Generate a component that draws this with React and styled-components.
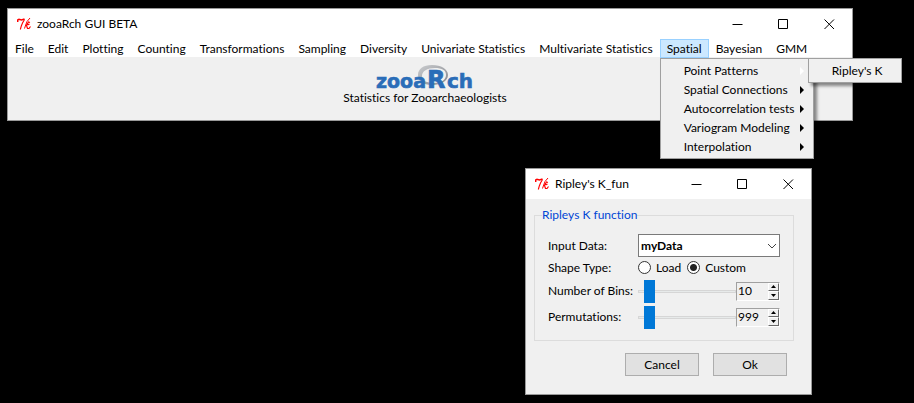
import React, { useState } from "react";
import styled, { createGlobalStyle, css } from "styled-components";

const GlobalStyle = createGlobalStyle`
  *, *::before, *::after { box-sizing: border-box; }
  body {
    margin: 0;
    background: #000;
    color: #000;
    font: 12px/16px Lato, "Open Sans", sans-serif;
    font-variant-ligatures: none;
  }
  button, input, select { font: inherit; color: inherit; margin: 0; }
`;

const Desktop = styled.main`
  position: relative;
  min-height: 100vh;
  padding: 8px 61px 8px 7px;
`;

const Window = styled.section`
  background: #f0f0f0;
  border: 1px solid #999;
`;

const Dialog = styled(Window)`
  position: absolute;
  left: 525px;
  top: 168px;
  width: 287px;
`;

const Bar = styled.header`
  display: flex;
  align-items: center;
  height: 30px;
  padding-left: 9px;
  background: #fff;
`;

const Title = styled.h1`
  flex: 1;
  margin: 0 0 0 6px;
  font-size: 12px;
  font-weight: 400;
  white-space: nowrap;
`;

const CaptionButton = styled.button`
  display: grid;
  place-items: center;
  width: 46px;
  height: 28px;
  padding: 0;
  border: 0;
  background: transparent;
`;

const MenuBar = styled.nav`
  display: flex;
  height: 18px;
  background: #fff;
`;

const MenuSlot = styled.div`
  position: relative;
`;

const MenuButton = styled.button`
  height: 19px;
  padding: 0 6px;
  border: 1px solid ${(p) => (p.$open ? "#99d1ff" : "transparent")};
  background: ${(p) => (p.$open ? "#cce8ff" : "transparent")};
  line-height: 17px;
  white-space: nowrap;
`;

const popup = css`
  position: absolute;
  z-index: 1;
  margin: 0;
  padding: 2px;
  list-style: none;
  background: #f0f0f0;
  border: 1px solid #a0a0a0;
  box-shadow: 3px 3px 3px rgba(0, 0, 0, 0.45);
`;

const Dropdown = styled.ul`
  ${popup}
  top: 19px;
  left: 0;
  width: 154px;
`;

const Submenu = styled.ul`
  ${popup}
  top: -3px;
  left: 145px;
  width: 94px;
`;

const Entry = styled.li`
  position: relative;
`;

const EntryButton = styled.button`
  display: flex;
  align-items: center;
  justify-content: space-between;
  width: 100%;
  height: 19px;
  padding: 0 7px 0 21px;
  border: 0;
  background: transparent;
  white-space: nowrap;
`;

const Banner = styled.div`
  display: flex;
  flex-direction: column;
  align-items: center;
  height: 63px;
  padding: 8px 10px 0 0;
`;

const DialogBody = styled.form`
  padding: 8px 17px 18px 8px;
`;

const Group = styled.fieldset`
  display: grid;
  grid-template-columns: 90px minmax(0, 1fr);
  align-items: center;
  min-width: 0;
  margin: 0;
  padding: 11px 13px 10px;
  border: 1px solid #dcdcdc;
`;

const Legend = styled.legend`
  margin-left: -6px;
  padding: 0;
  color: #0046d5;
`;

const FieldName = styled.label`
  white-space: nowrap;
`;

const SelectBox = styled.div`
  display: grid;
  align-items: center;
  justify-items: end;
  > * { grid-area: 1 / 1; }
  > svg { margin-right: 3px; pointer-events: none; }
`;

const Select = styled.select`
  appearance: none;
  width: 100%;
  height: 23px;
  padding: 0 2px;
  border: 1px solid #7a7a7a;
  border-radius: 0;
  background: #fff;
  font-weight: 700;
`;

const RadioRow = styled.div`
  display: flex;
  align-items: center;
  gap: 6px;
  height: 21px;
`;

const RadioLabel = styled.label`
  display: flex;
  align-items: center;
  gap: 5px;
`;

const Radio = styled.input`
  appearance: none;
  width: 13px;
  height: 13px;
  border: 1px solid #333;
  border-radius: 50%;
  background: #fff;
  &:checked { background: radial-gradient(circle, #222 0 3px, #fff 4px); }
`;

const AmountRow = styled.div`
  display: flex;
  align-items: center;
  height: 26px;
`;

const Slider = styled.input`
  appearance: none;
  flex: 1;
  min-width: 0;
  height: 23px;
  background: transparent;
  &::-webkit-slider-runnable-track {
    height: 3px;
    border: 1px solid #d6d6d6;
    background: #e7eaea;
  }
  &::-webkit-slider-thumb {
    appearance: none;
    width: 11px;
    height: 23px;
    margin-top: -11px;
    background: #0078d7;
  }
`;

const Spinner = styled.div`
  display: flex;
  width: 44px;
  height: 19px;
  border: 1px solid;
  border-color: #a0a0a0 #fff #fff #a0a0a0;
`;

const SpinInput = styled.input`
  flex: 1;
  min-width: 0;
  padding: 0 1px;
  border: 0;
  background: transparent;
`;

const SpinButtons = styled.div`
  display: grid;
  grid-template-rows: 1fr 1fr;
  width: 11px;
`;

const SpinButton = styled.button`
  display: grid;
  place-items: center;
  padding: 0;
  border: 1px solid;
  border-color: #fff #696969 #696969 #fff;
  background: #f0f0f0;
`;

const Actions = styled.div`
  display: flex;
  justify-content: flex-end;
  gap: 14px;
  padding: 12px 7px 0 0;
`;

const PushButton = styled.button`
  width: 74px;
  height: 23px;
  padding: 0;
  border: 1px solid #adadad;
  background: #e1e1e1;
`;

const TkIcon = () => (
  <svg width="14" height="12" viewBox="0 0 14 12" fill="none" stroke="#f00" aria-hidden="true">
    <path d="M0.7 4V2L2 1.200L4.500 2L7.500 1" strokeWidth="1.500" />
    <path d="M7.500 1.500L5.500 5L4.300 8L3.300 11.500" strokeWidth="1.100" />
    <path d="M13 0L10 3.500L8.700 7L7.500 10.500" strokeWidth="1" />
    <path d="M13 4.500L11.500 4L9 8M9.500 7.500L10.500 10.500H12L13.500 8.500M10.500 7L12.500 6" strokeWidth="1.200" />
  </svg>
);

const CAPTION_PATHS = {
  Minimize: "M0.500 5.500H10.500",
  Maximize: "M0.500 0.500H9.500V9.500H0.500Z",
  Close: "M0.500 0.500L10 10M10 0.500L0.500 10",
};

const TitleBar = ({ children }) => (
  <Bar>
    <TkIcon />
    <Title>{children}</Title>
    {Object.entries(CAPTION_PATHS).map(([name, d]) => (
      <CaptionButton key={name} type="button" aria-label={name}>
        <svg width="11" height="11" viewBox="0 0 11 11" fill="none" stroke="#000">
          <path d={d} />
        </svg>
      </CaptionButton>
    ))}
  </Bar>
);

const Logo = () => (
  <svg width="100" height="25" viewBox="0 0 100 25" overflow="visible" role="img" aria-label="zooaRch">
    <defs>
      <linearGradient id="ring" x1="0" y1="0" x2="1" y2="1">
        <stop offset="0" stopColor="#cbcdd0" />
        <stop offset="1" stopColor="#84868c" />
      </linearGradient>
    </defs>
    <path
      fill="url(#ring)"
      fillRule="evenodd"
      d="M57 0C66 0 73 4 73 10S66 20 57 20S43 16 43 10S48 0 57 0ZM60 3C52 3 47 6 47 11S52 18 59 18S71 15 71 10S67 3 60 3Z"
    />
    <g fill="#2a6db8" stroke="#2a6db8" strokeWidth="0.6" fontFamily="DejaVu Sans" fontWeight="700">
      <text x="1" y="23" fontSize="19">zooa</text>
      <text x="52" y="23" fontSize="24">R</text>
      <text x="72" y="23" fontSize="20">ch</text>
    </g>
  </svg>
);

const Arrow = ({ light }) => (
  <svg width="4" height="8" viewBox="0 0 4 8" fill={light ? "#fff" : "#000"} aria-hidden="true">
    <path d="M0 0L4 4L0 8Z" />
  </svg>
);

const MENUS = [
  "File", "Edit", "Plotting", "Counting", "Transformations", "Sampling", "Diversity",
  "Univariate Statistics", "Multivariate Statistics", "Spatial", "Bayesian", "GMM",
];

const SPATIAL = [
  { label: "Point Patterns", items: ["Ripley's K"] },
  { label: "Spatial Connections" },
  { label: "Autocorrelation tests" },
  { label: "Variogram Modeling" },
  { label: "Interpolation" },
];

const SpatialMenu = () => (
  <Dropdown>
    {SPATIAL.map(({ label, items }) => (
      <Entry key={label}>
        <EntryButton type="button">
          {label}
          <Arrow light={Boolean(items)} />
        </EntryButton>
        {items && (
          <Submenu>
            {items.map((item) => (
              <Entry key={item}>
                <EntryButton type="button">{item}</EntryButton>
              </Entry>
            ))}
          </Submenu>
        )}
      </Entry>
    ))}
  </Dropdown>
);

const Amount = ({ id, label, initial, min, max }) => {
  const [value, setValue] = useState(initial);
  const change = (next) => setValue(Math.min(max, Math.max(min, Number(next) || min)));
  return (
    <>
      <FieldName htmlFor={id}>{label}</FieldName>
      <AmountRow>
        <Slider
          type="range"
          aria-label={label}
          min={min}
          max={max}
          value={value}
          onChange={(e) => change(e.target.value)}
        />
        <Spinner>
          <SpinInput id={id} inputMode="numeric" value={value} onChange={(e) => change(e.target.value)} />
          <SpinButtons>
            <SpinButton type="button" aria-label="Increase" onClick={() => change(value + 1)}>
              <svg width="5" height="3" viewBox="0 0 5 3"><path d="M0 3L2.500 0L5 3Z" /></svg>
            </SpinButton>
            <SpinButton type="button" aria-label="Decrease" onClick={() => change(value - 1)}>
              <svg width="5" height="3" viewBox="0 0 5 3"><path d="M0 0L2.500 3L5 0Z" /></svg>
            </SpinButton>
          </SpinButtons>
        </Spinner>
      </AmountRow>
    </>
  );
};

const RipleyDialog = () => (
  <Dialog aria-label="Ripley's K_fun">
    <TitleBar>Ripley's K_fun</TitleBar>
    <DialogBody onSubmit={(e) => e.preventDefault()}>
      <Group>
        <Legend>Ripleys K function</Legend>
        <FieldName htmlFor="data">Input Data:</FieldName>
        <SelectBox>
          <Select id="data"><option>myData</option></Select>
          <svg width="10" height="6" viewBox="0 0 10 6" fill="none" stroke="#444">
            <path d="M1 1L5 5L9 1" />
          </svg>
        </SelectBox>
        <FieldName as="span" id="shape">Shape Type:</FieldName>
        <RadioRow role="radiogroup" aria-labelledby="shape">
          <RadioLabel><Radio type="radio" name="shape" />Load</RadioLabel>
          <RadioLabel><Radio type="radio" name="shape" defaultChecked />Custom</RadioLabel>
        </RadioRow>
        <Amount id="bins" label="Number of Bins:" initial={10} min={4} max={100} />
        <Amount id="permutations" label="Permutations:" initial={999} min={399} max={9999} />
      </Group>
      <Actions>
        <PushButton type="button">Cancel</PushButton>
        <PushButton type="submit">Ok</PushButton>
      </Actions>
    </DialogBody>
  </Dialog>
);

export default function App() {
  return (
    <>
      <GlobalStyle />
      <Desktop>
        <Window aria-label="zooaRch GUI BETA">
          <TitleBar>zooaRch GUI BETA</TitleBar>
          <MenuBar>
            {MENUS.map((name) => (
              <MenuSlot key={name}>
                <MenuButton type="button" $open={name === "Spatial"}>{name}</MenuButton>
                {name === "Spatial" && <SpatialMenu />}
              </MenuSlot>
            ))}
          </MenuBar>
          <Banner>
            <Logo />
            <span>Statistics for Zooarchaeologists</span>
          </Banner>
        </Window>
        <RipleyDialog />
      </Desktop>
    </>
  );
}
